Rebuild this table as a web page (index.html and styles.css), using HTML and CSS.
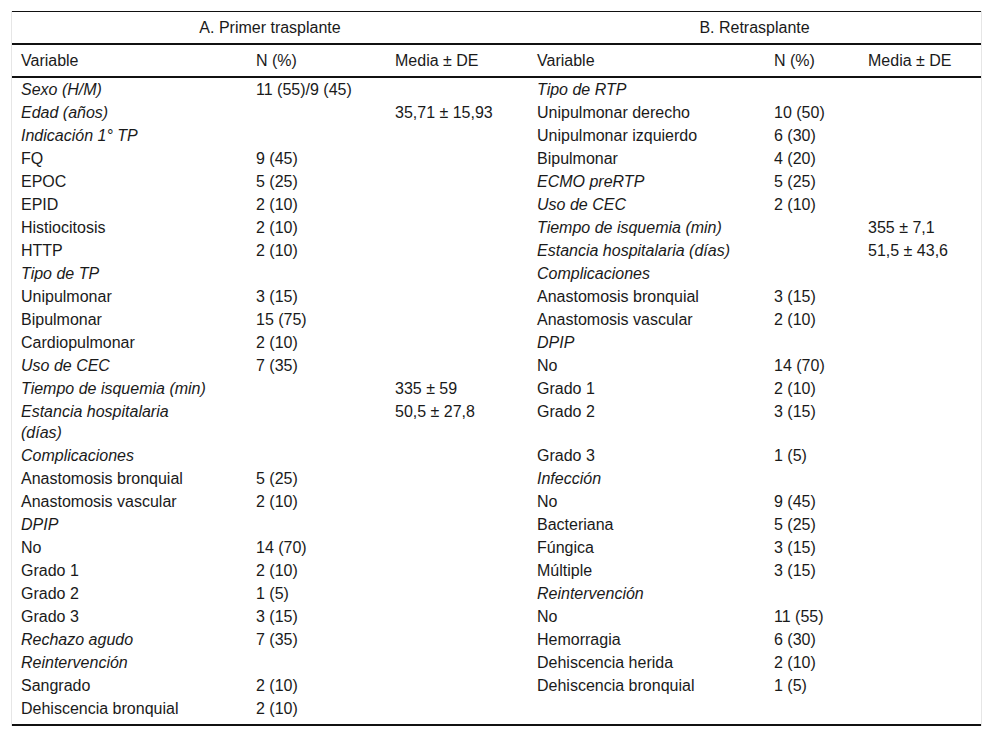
FILE: index.html
```html
<!DOCTYPE html>
<html lang="es">
<head>
<meta charset="utf-8">
<title>Tabla</title>
<link rel="stylesheet" href="styles.css">
</head>
<body>
<div class="wrap">
<table class="tbl">
<colgroup>
<col class="c1"><col class="c2"><col class="c3"><col class="c4"><col class="c5"><col class="c6">
</colgroup>
<thead>
<tr class="group"><th colspan="3">A. Primer trasplante</th><th colspan="3">B. Retrasplante</th></tr>
<tr class="heads"><th>Variable</th><th>N (%)</th><th>Media ± DE</th><th>Variable</th><th>N (%)</th><th>Media ± DE</th></tr>
</thead>
<tbody>
<tr><td class="it">Sexo (H/M)</td><td>11 (55)/9 (45)</td><td></td><td class="it">Tipo de RTP</td><td></td><td></td></tr>
<tr><td class="it">Edad (años)</td><td></td><td>35,71 ± 15,93</td><td>Unipulmonar derecho</td><td>10 (50)</td><td></td></tr>
<tr><td class="it">Indicación 1° TP</td><td></td><td></td><td>Unipulmonar izquierdo</td><td>6 (30)</td><td></td></tr>
<tr><td>FQ</td><td>9 (45)</td><td></td><td>Bipulmonar</td><td>4 (20)</td><td></td></tr>
<tr><td>EPOC</td><td>5 (25)</td><td></td><td class="it">ECMO preRTP</td><td>5 (25)</td><td></td></tr>
<tr><td>EPID</td><td>2 (10)</td><td></td><td class="it">Uso de CEC</td><td>2 (10)</td><td></td></tr>
<tr><td>Histiocitosis</td><td>2 (10)</td><td></td><td class="it">Tiempo de isquemia (min)</td><td></td><td>355 ± 7,1</td></tr>
<tr><td>HTTP</td><td>2 (10)</td><td></td><td class="it">Estancia hospitalaria (días)</td><td></td><td>51,5 ± 43,6</td></tr>
<tr><td class="it">Tipo de TP</td><td></td><td></td><td class="it">Complicaciones</td><td></td><td></td></tr>
<tr><td>Unipulmonar</td><td>3 (15)</td><td></td><td>Anastomosis bronquial</td><td>3 (15)</td><td></td></tr>
<tr><td>Bipulmonar</td><td>15 (75)</td><td></td><td>Anastomosis vascular</td><td>2 (10)</td><td></td></tr>
<tr><td>Cardiopulmonar</td><td>2 (10)</td><td></td><td class="it">DPIP</td><td></td><td></td></tr>
<tr><td class="it">Uso de CEC</td><td>7 (35)</td><td></td><td>No</td><td>14 (70)</td><td></td></tr>
<tr><td class="it">Tiempo de isquemia (min)</td><td></td><td>335 ± 59</td><td>Grado 1</td><td>2 (10)</td><td></td></tr>
<tr><td class="it">Estancia hospitalaria<br>(días)</td><td></td><td>50,5 ± 27,8</td><td>Grado 2</td><td>3 (15)</td><td></td></tr>
<tr><td class="it">Complicaciones</td><td></td><td></td><td>Grado 3</td><td>1 (5)</td><td></td></tr>
<tr><td>Anastomosis bronquial</td><td>5 (25)</td><td></td><td class="it">Infección</td><td></td><td></td></tr>
<tr><td>Anastomosis vascular</td><td>2 (10)</td><td></td><td>No</td><td>9 (45)</td><td></td></tr>
<tr><td class="it">DPIP</td><td></td><td></td><td>Bacteriana</td><td>5 (25)</td><td></td></tr>
<tr><td>No</td><td>14 (70)</td><td></td><td>Fúngica</td><td>3 (15)</td><td></td></tr>
<tr><td>Grado 1</td><td>2 (10)</td><td></td><td>Múltiple</td><td>3 (15)</td><td></td></tr>
<tr><td>Grado 2</td><td>1 (5)</td><td></td><td class="it">Reintervención</td><td></td><td></td></tr>
<tr><td>Grado 3</td><td>3 (15)</td><td></td><td>No</td><td>11 (55)</td><td></td></tr>
<tr><td class="it">Rechazo agudo</td><td>7 (35)</td><td></td><td>Hemorragia</td><td>6 (30)</td><td></td></tr>
<tr><td class="it">Reintervención</td><td></td><td></td><td>Dehiscencia herida</td><td>2 (10)</td><td></td></tr>
<tr><td>Sangrado</td><td>2 (10)</td><td></td><td>Dehiscencia bronquial</td><td>1 (5)</td><td></td></tr>
<tr class="last"><td>Dehiscencia bronquial</td><td>2 (10)</td><td></td><td></td><td></td><td></td></tr>
</tbody>
</table>
</div>
</body>
</html>
```
FILE: styles.css
```css
html, body {
  margin: 0;
  padding: 0;
  background: #fff;
}
body {
  font-family: "Liberation Sans", Arial, sans-serif;
  font-size: 16px;
  color: #1a1a1a;
}
.wrap {
  margin: 11px 0 0 11px;
  width: 969px;
  border-left: 1px solid #e6e6e6;
  border-right: 1px solid #e6e6e6;
}
.tbl {
  width: 969px;
  table-layout: fixed;
  border-collapse: separate;
  border-spacing: 0;
  border-top: 1px solid #111;
  border-bottom: 2px solid #111;
}
.c1 { width: 235px; }
.c2 { width: 139px; }
.c3 { width: 142px; }
.c4 { width: 237px; }
.c5 { width: 94px; }
.c6 { width: 122px; }
.tbl th {
  font-weight: normal;
  text-align: left;
  padding: 5px 2px 5px 9px;
  line-height: 21px;
  border-bottom: 2px solid #111;
  white-space: nowrap;
}
.tbl .group th {
  text-align: center;
  padding-left: 0;
  padding-right: 0;
}
.tbl td {
  padding: 1px 2px 1px 9px;
  line-height: 21px;
  vertical-align: top;
  white-space: nowrap;
}
.tbl .last td {
  padding-bottom: 5px;
}
.it {
  font-style: italic;
}
```
